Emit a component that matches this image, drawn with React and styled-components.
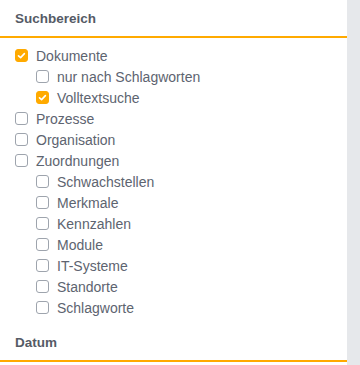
import styled, { createGlobalStyle } from 'styled-components';

const GlobalStyle = createGlobalStyle`
  body {
    margin: 0;
    background: #fff;
    font-family: "Liberation Sans", Arial, sans-serif;
  }
`

const Page = styled.div`
  display: flex;
  flex-direction: row;
  width: 360px;
  height: 365px;
  overflow: hidden;
`

const Panel = styled.div`
  width: 347px;
  display: flex;
  flex-direction: column;
`

const Scrollbar = styled.div`
  width: 13px;
  background: #e6e8eb;
`

const SectionHeader = styled.div`
  height: 36px;
  display: flex;
  align-items: center;
  padding-left: 15px;
  border-bottom: 2px solid #ffaa00;
  color: #555b66;
  font-size: 13.5px;
  font-weight: bold;
`

const OptionList = styled.div`
  display: flex;
  flex-direction: column;
  padding: 7px 0 6px 15px;
`

const Row = styled.label`
  display: flex;
  flex-direction: row;
  align-items: center;
  height: 21px;
  padding-left: ${p => p.$level * 21}px;
  color: #5d6470;
  font-size: 14px;
`

const Box = styled.span`
  width: 13px;
  height: 13px;
  box-sizing: border-box;
  border-radius: 3px;
  border: 1px solid ${p => (p.$checked ? '#ffaa00' : '#9ea4ad')};
  background: ${p => (p.$checked ? '#ffaa00' : '#fff')};
  margin-right: 8px;
  display: flex;
  align-items: center;
  justify-content: center;
`

const options = [
  { label: 'Dokumente', level: 0, checked: true },
  { label: 'nur nach Schlagworten', level: 1 },
  { label: 'Volltextsuche', level: 1, checked: true },
  { label: 'Prozesse', level: 0 },
  { label: 'Organisation', level: 0 },
  { label: 'Zuordnungen', level: 0 },
  { label: 'Schwachstellen', level: 1 },
  { label: 'Merkmale', level: 1 },
  { label: 'Kennzahlen', level: 1 },
  { label: 'Module', level: 1 },
  { label: 'IT-Systeme', level: 1 },
  { label: 'Standorte', level: 1 },
  { label: 'Schlagworte', level: 1 },
]

function Check() {
  return (
    <svg width="9" height="9" viewBox="0 0 9 9">
      <path d="M1.5 4.8 L3.6 6.6 L7.4 2.6" fill="none" stroke="#fff" strokeWidth="1.6" strokeLinecap="round" strokeLinejoin="round"/>
    </svg>
  );
}

function App() {
  return (
    <Page>
      <GlobalStyle/>
      <Panel>
        <SectionHeader>Suchbereich</SectionHeader>
        <OptionList>
          {options.map((o) =>
            <Row key={o.label} $level={o.level}>
              <Box $checked={o.checked}>{o.checked && <Check/>}</Box>
              {o.label}
            </Row>
          )}
        </OptionList>
        <SectionHeader>Datum</SectionHeader>
      </Panel>
      <Scrollbar/>
    </Page>
  );
}

export default App;
